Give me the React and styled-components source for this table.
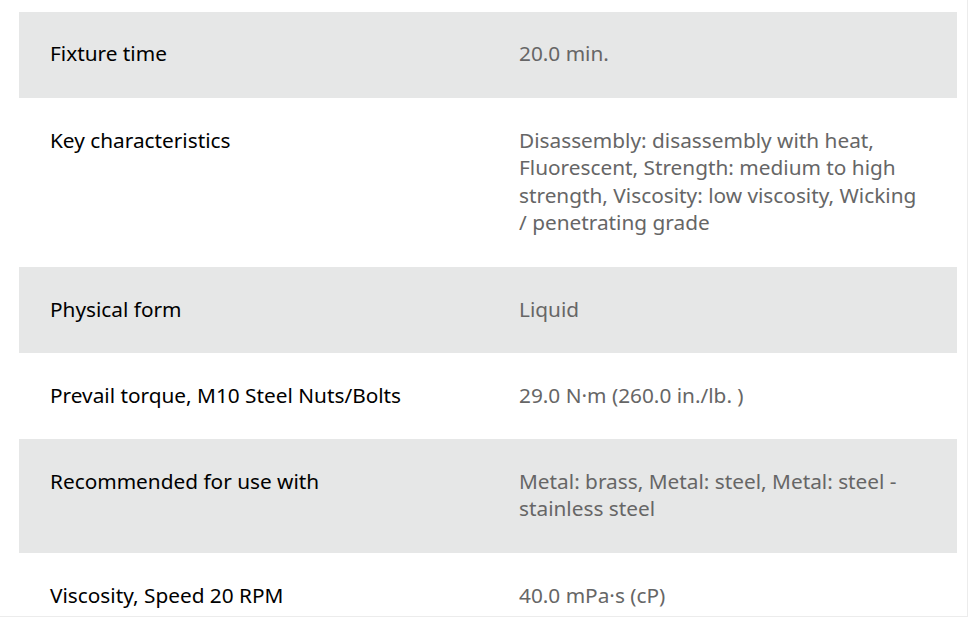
import styled, { createGlobalStyle } from 'styled-components';

const GlobalStyle = createGlobalStyle`
  html, body {
    margin: 0;
    padding: 0;
    background: #ffffff;
  }
`

const Frame = styled.div`
  width: 968px;
  height: 617px;
  box-sizing: border-box;
  padding: 12px 10px 0 19px;
  border-right: 1px solid #ececec;
  border-bottom: 1px solid #ececec;
  overflow: hidden;
  font-family: "Noto Sans", "Open Sans", sans-serif;
  font-size: 20.8px;
  line-height: 27.6px;
`

const Table = styled.div`
  display: flex;
  flex-direction: column;
`

const Row = styled.div`
  display: grid;
  grid-template-columns: 1fr 1fr;
  background: ${({ $shaded }) => ($shaded ? '#e6e7e7' : '#ffffff')};
`

const Cell = styled.div`
  padding: 28.4px 38px 30.2px 31px;
`

const Label = styled(Cell)`
  color: #000000;
`

const Value = styled(Cell)`
  color: #666666;
`

const specs = [
  { label: 'Fixture time', value: '20.0 min.' },
  {
    label: 'Key characteristics',
    value: 'Disassembly: disassembly with heat, Fluorescent, Strength: medium to high strength, Viscosity: low viscosity, Wicking / penetrating grade',
  },
  { label: 'Physical form', value: 'Liquid' },
  { label: 'Prevail torque, M10 Steel Nuts/Bolts', value: '29.0 N·m (260.0 in./lb. )' },
  { label: 'Recommended for use with', value: 'Metal: brass, Metal: steel, Metal: steel - stainless steel' },
  { label: 'Viscosity, Speed 20 RPM', value: '40.0 mPa·s (cP)' },
]

export default function App() {
  return (
    <>
      <GlobalStyle />
      <Frame>
        <Table>
          {specs.map((spec, i) => (
            <Row key={i} $shaded={i % 2 === 0}>
              <Label>{spec.label}</Label>
              <Value>{spec.value}</Value>
            </Row>
          ))}
        </Table>
      </Frame>
    </>
  )
}
